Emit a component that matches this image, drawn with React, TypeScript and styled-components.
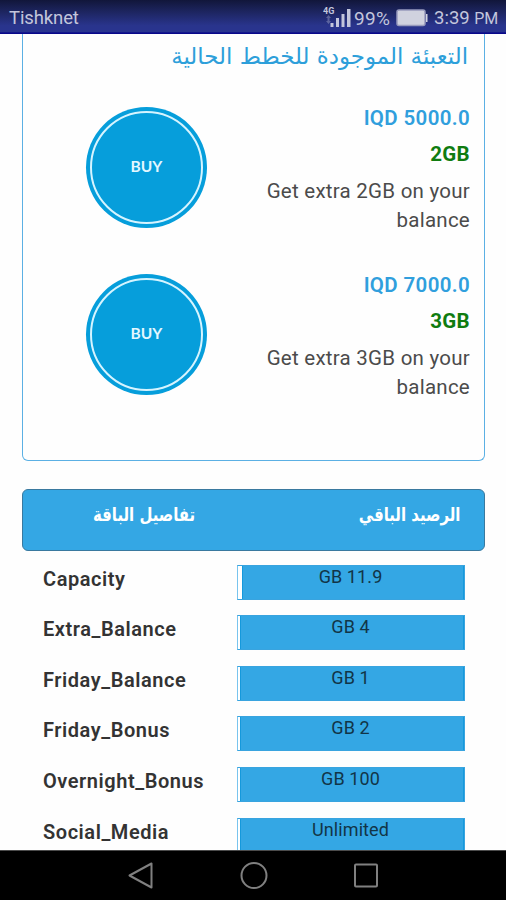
import React from "react";
import styled, { createGlobalStyle } from "styled-components";

const Global = createGlobalStyle`
  * { box-sizing: border-box; }
  body { margin: 0; background: #fefefe; font-family: Roboto, "DejaVu Sans", sans-serif; }
`;

const Screen = styled.div`
  width: 506px;
  height: 900px;
  display: flex;
  flex-direction: column;
  overflow: hidden;
  background: #fefefe;
`;

const StatusBar = styled.header`
  flex: none;
  height: 34px;
  padding: 2px 8px 0 9px;
  display: flex;
  align-items: center;
  justify-content: space-between;
  background: linear-gradient(#11163a 0%, #1d2560 35%, #29348c 75%, #29348f 93%, #09088a 97%);
  color: #c3c6dc;
  font-size: 18.5px;
  white-space: nowrap;
`;

const StatusGroup = styled.div`
  display: flex;
  align-items: center;
`;

const Carrier = styled.span`
  letter-spacing: -0.12px;
`;

const Percent = styled.span`
  margin-left: 2px;
  width: 42px;
  font-size: 19px;
  letter-spacing: 0.3px;
`;

const Clock = styled.span`
  margin-left: 6px;
  width: 64px;
  small { font-size: 16px; }
`;

const Content = styled.main`
  flex: 1;
  min-height: 0;
  overflow: hidden;
  padding: 0 21px 0 22px;
`;

const PlanCard = styled.section`
  height: 427px;
  border: 1.5px solid #5bb0e4;
  border-top: 0;
  border-radius: 0 0 6px 6px;
  padding: 0 14px 0 15px;
`;

const PlanTitle = styled.h2`
  margin: 0;
  height: 73px;
  padding: 7px 2px 0 0;
  direction: rtl;
  font: 400 22.9px/30px "DejaVu Sans", sans-serif;
  color: #2d9fda;
  white-space: nowrap;
`;

const Offer = styled.article`
  height: 167.3px;
  display: flex;
  justify-content: space-between;
  padding-left: 48px;
`;

const BuyButton = styled.button`
  width: 121px;
  height: 121px;
  padding: 4px;
  border: 0;
  border-radius: 50%;
  background: #069edb;
  span {
    display: flex;
    align-items: center;
    justify-content: center;
    height: 100%;
    border: 2px solid #d6f4ff;
    border-radius: 50%;
    color: #e4f7ff;
    font: 700 15.5px Lato, "Open Sans", sans-serif;
    padding-bottom: 3px;
  }
`;

const OfferInfo = styled.div`
  width: 230px;
  text-align: right;
  font-size: 20.5px;
`;

const Price = styled.div`
  font-weight: 600;
  line-height: 22px;
  letter-spacing: 0.35px;
  color: #309fdd;
`;

const Volume = styled.div`
  margin-top: 15px;
  font-weight: 700;
  line-height: 21px;
  letter-spacing: 0.3px;
  color: #107c10;
`;

const Description = styled.p`
  margin: 11.5px 0 0;
  line-height: 29.5px;
  letter-spacing: 0.25px;
  color: #4b4b4b;
`;

const TableHeader = styled.div`
  margin-top: 28px;
  height: 62px;
  padding: 10px 24px 0 70px;
  display: flex;
  justify-content: space-between;
  border: 1.5px solid #39799f;
  border-radius: 6px;
  background: #34a7e4;
  color: #fff;
  font: 700 19px/28px "DejaVu Sans", sans-serif;
  white-space: nowrap;
`;

const HeaderLabel = styled.span<{ $side: "left" | "right" }>`
  transform: scaleX(0.785);
  transform-origin: ${(p) => p.$side} center;
`;

const UsageRow = styled.div`
  height: 50.6px;
  padding: 0 20.5px 0 21px;
  display: flex;
  justify-content: space-between;
`;

const UsageName = styled.div`
  font-size: 20px;
  line-height: 28px;
  font-weight: 600;
  letter-spacing: 0.55px;
  color: #333;
`;

const UsageBar = styled.div<{ $gap: number }>`
  width: 228px;
  height: 35px;
  border: 1px solid #39a4df;
  border-left-color: #78c4ee;
  padding-left: ${(p) => p.$gap}px;
  background: #fff;
  span {
    display: block;
    height: 100%;
    background: #34a7e4;
    border-left: 1px solid #1599dc;
    border-right: 1px solid #1599dc;
    text-align: center;
    color: #123547;
    font-size: 18px;
    letter-spacing: 0.1px;
    line-height: 22px;
    padding-right: ${(p) => (p.$gap > 2 ? 4 : 2)}px;
  }
`;

const Usages = styled.section`
  padding-top: 13.7px;
`;

const NavBar = styled.nav`
  flex: none;
  height: 50px;
  background: #000;
  border-top: 1px solid #4c4c4c;
  padding-left: 1px;
  display: flex;
  align-items: center;
  justify-content: center;
  gap: 84.5px;
`;

const offers = [
  { price: "IQD 5000.0", volume: "2GB" },
  { price: "IQD 7000.0", volume: "3GB" },
];

const usages = [
  { name: "Capacity", value: "GB 11.9", gap: 4 },
  { name: "Extra_Balance", value: "GB 4", gap: 2 },
  { name: "Friday_Balance", value: "GB 1", gap: 2 },
  { name: "Friday_Bonus", value: "GB 2", gap: 2 },
  { name: "Overnight_Bonus", value: "GB 100", gap: 2 },
  { name: "Social_Media", value: "Unlimited", gap: 2 },
];

const SignalIcon = () => (
  <svg width="29" height="24" viewBox="0 0 29 24" fill="#c3c6dc">
    <text x="0" y="7.500" fontSize="9" fontWeight="700" fontFamily="Roboto">4G</text>
    <path d="M5.500 9l2.500 3H6.500v3H8l-2.500 3-2.500-3h1.500v-3H3z" opacity=".35" />
    <path d="M7.500 17h3v4h-3zM13 12h3v9h-3zM18.500 8h3v13h-3zM24 3h3.500v18H24z" />
  </svg>
);

const BatteryIcon = () => (
  <svg width="32" height="18" viewBox="0 0 32 18">
    <rect x="1" y="1" width="28" height="15.500" rx="2" fill="#d0d2df" stroke="#989bbd" strokeWidth="1.500" />
    <path d="M30 5h1.500v8H30z" fill="#d0d2df" />
  </svg>
);

export default function App() {
  return (
    <Screen>
      <Global />
      <StatusBar>
        <Carrier>Tishknet</Carrier>
        <StatusGroup>
          <SignalIcon />
          <Percent>99%</Percent>
          <BatteryIcon />
          <Clock>3:39 <small>PM</small></Clock>
        </StatusGroup>
      </StatusBar>
      <Content>
        <PlanCard>
          <PlanTitle>التعبئة الموجودة للخطط الحالية</PlanTitle>
          {offers.map((o) => (
            <Offer key={o.price}>
              <BuyButton><span>BUY</span></BuyButton>
              <OfferInfo>
                <Price>{o.price}</Price>
                <Volume>{o.volume}</Volume>
                <Description>Get extra {o.volume} on your balance</Description>
              </OfferInfo>
            </Offer>
          ))}
        </PlanCard>
        <TableHeader>
          <HeaderLabel $side="left">تفاصيل الباقة</HeaderLabel>
          <HeaderLabel $side="right">الرصيد الباقي</HeaderLabel>
        </TableHeader>
        <Usages>
          {usages.map((u) => (
            <UsageRow key={u.name}>
              <UsageName>{u.name}</UsageName>
              <UsageBar $gap={u.gap}><span>{u.value}</span></UsageBar>
            </UsageRow>
          ))}
        </Usages>
      </Content>
      <NavBar>
        <svg width="28" height="30" viewBox="0 0 28 30" fill="none" stroke="#808080" strokeWidth="2" strokeLinejoin="round">
          <path d="M24.500 2.500v24L2.500 14.500z" />
        </svg>
        <svg width="28" height="30" viewBox="0 0 28 30" fill="none" stroke="#808080" strokeWidth="2">
          <circle cx="14" cy="14.500" r="12.500" />
        </svg>
        <svg width="28" height="30" viewBox="0 0 28 30" fill="none" stroke="#808080" strokeWidth="2">
          <rect x="3" y="3.500" width="22" height="22" rx="1" />
        </svg>
      </NavBar>
    </Screen>
  );
}
